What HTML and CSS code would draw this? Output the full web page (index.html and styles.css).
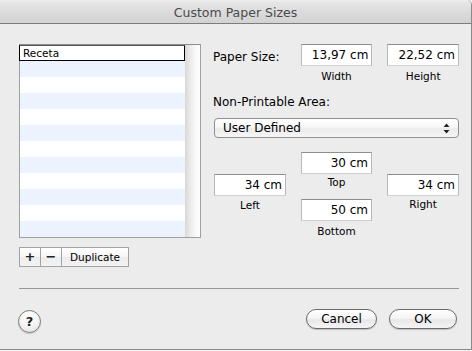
FILE: index.html
```html
<!DOCTYPE html>
<html lang="en">
<head>
    <meta charset="utf-8">
    <title>Custom Paper Sizes</title>
    <link rel="stylesheet" href="styles.css">
</head>
<body>
<div class="window">
    <div class="titlebar">Custom Paper Sizes</div>

    <div class="content">
        <div class="main">
            <!-- paper list -->
            <div class="left">
                <div class="list">
                    <div class="rows">
                        <div class="row editing">Receta</div>
                        <div class="row"></div>
                        <div class="row"></div>
                        <div class="row"></div>
                        <div class="row"></div>
                        <div class="row"></div>
                        <div class="row"></div>
                        <div class="row"></div>
                        <div class="row"></div>
                        <div class="row"></div>
                        <div class="row"></div>
                        <div class="row"></div>
                    </div>
                    <div class="scroller"></div>
                </div>
                <div class="list-buttons">
                    <button class="seg">+</button><button class="seg">&minus;</button><button class="seg dup">Duplicate</button>
                </div>
            </div>

            <!-- settings -->
            <div class="right">
                <div class="size-row">
                    <span class="label size-label">Paper Size:</span>
                    <div class="field-group">
                        <div class="field">13,97 cm</div>
                        <div class="caption">Width</div>
                    </div>
                    <div class="field-group">
                        <div class="field">22,52 cm</div>
                        <div class="caption">Height</div>
                    </div>
                </div>

                <div class="label np-label">Non-Printable Area:</div>
                <div class="popup">
                    <span>User Defined</span>
                    <svg class="arrows" width="7" height="11" viewBox="0 0 7 11">
                        <path d="M3.5 0.5 L6.5 4 L0.5 4 Z" fill="#222"/>
                        <path d="M3.5 10.5 L6.5 7 L0.5 7 Z" fill="#222"/>
                    </svg>
                </div>

                <div class="margins">
                    <div class="field-group side">
                        <div class="field">34 cm</div>
                        <div class="caption">Left</div>
                    </div>
                    <div class="field-group mid">
                        <div class="field">30 cm</div>
                        <div class="caption top-cap">Top</div>
                        <div class="field bottom-field">50 cm</div>
                        <div class="caption">Bottom</div>
                    </div>
                    <div class="field-group side">
                        <div class="field">34 cm</div>
                        <div class="caption right-cap">Right</div>
                    </div>
                </div>
            </div>
        </div>

        <div class="separator"></div>

        <div class="footer">
            <button class="help">?</button>
            <div class="spacer"></div>
            <button class="pill cancel">Cancel</button>
            <button class="pill ok">OK</button>
        </div>
    </div>
</div>
</body>
</html>
```

FILE: styles.css
```css
html, body {
    margin: 0;
    padding: 0;
}
body {
    background: #f4f4f4;
    font-family: "DejaVu Sans", sans-serif;
    font-size: 12px;
    color: #000;
    width: 472px;
    height: 351px;
    overflow: hidden;
}

.window {
    width: 472px;
    height: 350px;
    box-sizing: border-box;
    background: #ececec;
    border-right: 1px solid #8a8a8a;
    border-bottom: 1px solid #8a8a8a;
    border-top-right-radius: 5px;
    display: flex;
    flex-direction: column;
}

.titlebar {
    height: 23px;
    line-height: 25px;
    text-align: center;
    font-size: 12.5px;
    color: #4a4a4a;
    background: linear-gradient(to bottom, #f0f0f0 0, #e6e6e6 2px, #dcdcdc 50%, #d2d2d2 100%);
    border-bottom: 1px solid #7c7c7c;
    border-top-right-radius: 5px;
}

.content {
    padding: 20px 0 0 19px;
    flex: 1;
    display: flex;
    flex-direction: column;
}

.main {
    display: flex;
    gap: 12px;
}

/* list */
.left { width: 182px; }
.list {
    display: flex;
    height: 194px;
    box-sizing: border-box;
    border: 1px solid #a0a0a0;
    border-top-color: #8c8c8c;
    background: #fff;
}
.rows { width: 165px; }
.row {
    height: 16px;
    box-sizing: border-box;
    font-size: 10.5px;
    line-height: 15px;
    padding-left: 3px;
}
.row:nth-child(even) { background: #edf3fe; }
.row.editing {
    border: 1px solid #000;
    border-top-color: #555;
    margin-left: -1px;
    padding-left: 3px;
    background: #fff;
}
.scroller {
    flex: 1;
    background: linear-gradient(to right, #d8d8d8 0, #e9e9e9 30%, #f9f9f9 70%, #fdfdfd 100%);
}

.list-buttons {
    display: flex;
    margin-top: 9px;
}
.seg {
    height: 20px;
    width: 22px;
    padding: 0;
    margin: 0 0 0 -1px;
    border: 1px solid #a2a2a2;
    background: linear-gradient(to bottom, #ffffff 0, #f6f6f6 50%, #ececec 51%, #f3f3f3 100%);
    font-family: "DejaVu Sans", sans-serif;
    font-size: 13px;
    font-weight: bold;
    color: #222;
    line-height: 16px;
}
.seg:first-child { margin-left: 0; }
.seg.dup {
    width: 68px;
    font-size: 10.5px;
    font-weight: normal;
    color: #000;
}

/* right side */
.right { width: 246px; }
.label { line-height: 16px; }
.size-row {
    display: flex;
    gap: 15px;
}
.size-label {
    width: 73px;
    margin-top: 5px;
}
.field-group {
    display: flex;
    flex-direction: column;
    width: 72px;
}
.field {
    height: 22px;
    box-sizing: border-box;
    background: #fff;
    border: 1px solid #b8b8b8;
    border-top-color: #8e8e8e;
    border-bottom-color: #d0d0d0;
    text-align: right;
    padding-right: 3px;
    line-height: 21px;
}
.caption {
    font-size: 10.5px;
    line-height: 14px;
    text-align: center;
    margin-top: 3px;
}

.np-label { margin-top: 11px; }
.popup {
    margin: 8px 0 0 1px;
    height: 20px;
    box-sizing: border-box;
    border: 1px solid #8f8f8f;
    border-radius: 4px;
    background: linear-gradient(to bottom, #ffffff 0, #f7f7f7 45%, #ebebeb 55%, #f6f6f6 100%);
    display: flex;
    align-items: center;
    justify-content: space-between;
    padding: 0 8px 0 8px;
    line-height: 18px;
}
.arrows { display: block; }

.margins {
    display: flex;
    gap: 15px;
    margin: 14px 0 0 1px;
}
.field-group.mid { width: 71px; }
.side { padding-top: 22px; }
.side .caption { margin-top: 2px; }
.side .right-cap { margin-top: 1px; }
.top-cap { margin-top: 1px; }
.bottom-field { margin-top: 10px; }

.separator {
    margin-top: 21px;
    width: 440px;
    border-top: 1px solid #979797;
}

.footer {
    display: flex;
    align-items: flex-start;
    width: 438px;
    margin-top: 20px;
}
.spacer { flex: 1; }
.help {
    width: 23px;
    height: 23px;
    margin: 1px 0 0 -1px;
    padding: 0;
    border-radius: 50%;
    border: 1px solid #7a7a7a;
    background: radial-gradient(circle at 50% 30%, #ffffff 0, #f4f4f4 50%, #dcdcdc 100%);
    box-shadow: 0 1px 1px rgba(0, 0, 0, 0.15);
    font-family: "DejaVu Sans", sans-serif;
    font-size: 13px;
    font-weight: bold;
    color: #222;
    line-height: 20px;
}
.pill {
    height: 20px;
    padding: 0;
    border: 1px solid #6a6a6a;
    border-radius: 10px;
    background: linear-gradient(to bottom, #ffffff 0, #f5f5f5 45%, #e7e7e7 55%, #f4f4f4 100%);
    box-shadow: 0 1px 1px rgba(0, 0, 0, 0.2);
    font-family: "DejaVu Sans", sans-serif;
    font-size: 12px;
    color: #000;
    line-height: 17px;
}
.cancel { width: 71px; margin-right: 12px; }
.ok { width: 68px; }
```
